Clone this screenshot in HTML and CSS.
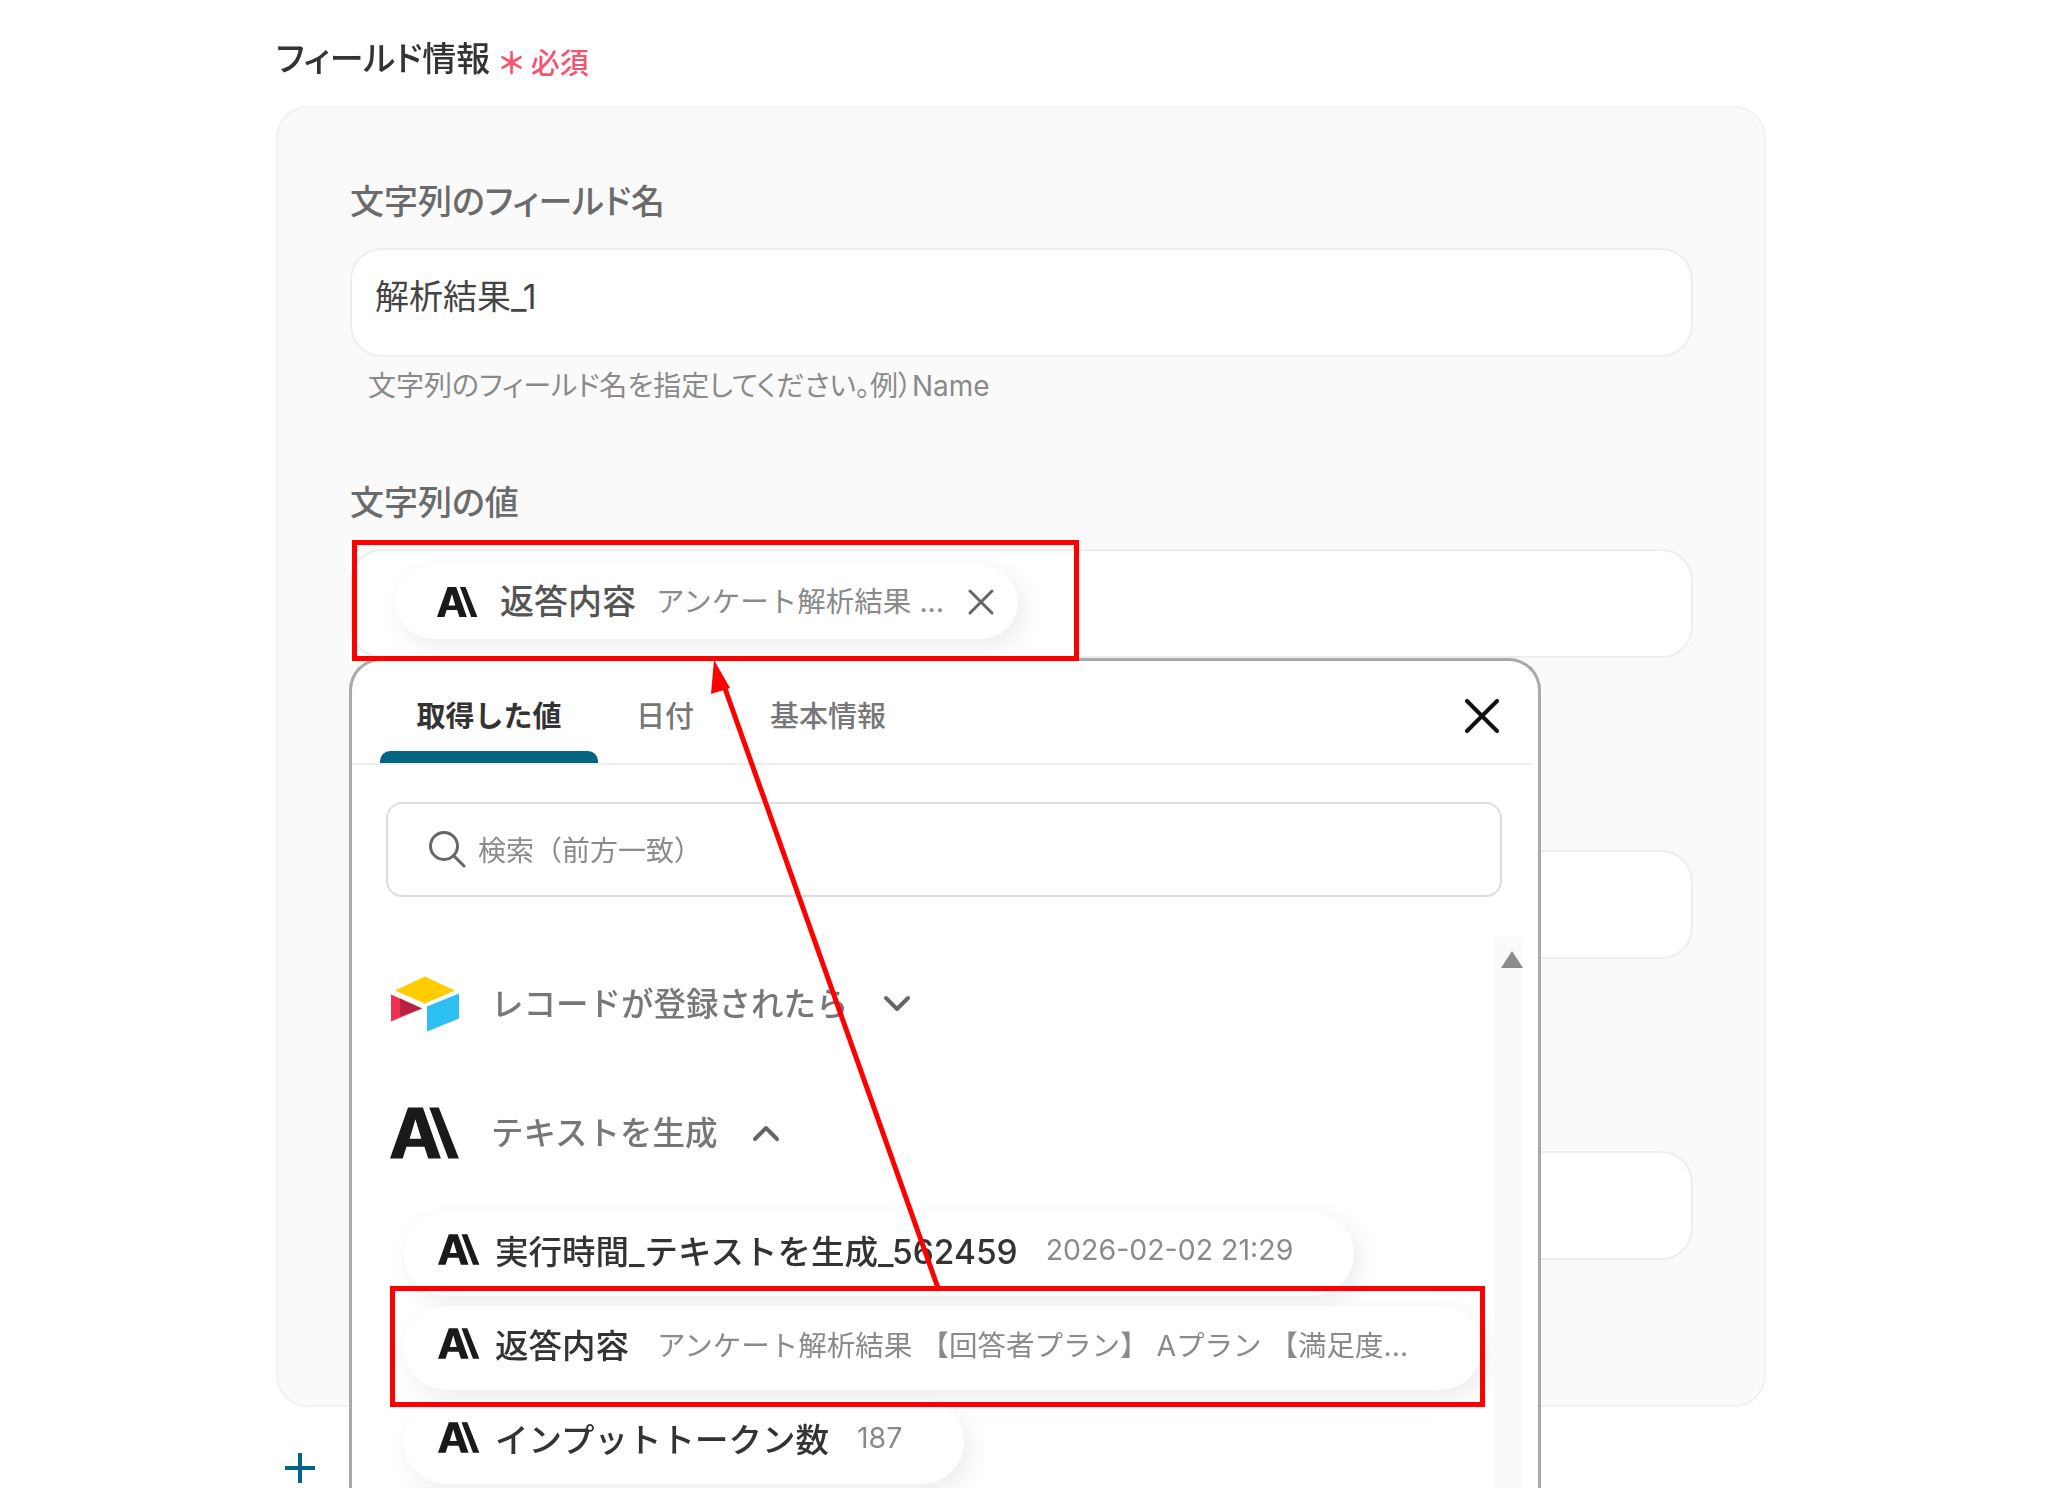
FILE: index.html
```html
<!DOCTYPE html>
<html lang="ja">
<head>
  <meta charset="UTF-8">
  <title>フィールド情報</title>
  <link rel="stylesheet" href="styles.css">
</head>
<body>
  <svg width="0" height="0" class="defs">
    <symbol id="claude" viewBox="0 0 66 48">
      <path fill-rule="evenodd" d="M0 48 L17 0 H31 L48 48 H36 L32.500 37 H15.500 L12 48Z M18.500 29.500 H29.500 L24 11Z"/>
      <path d="M37 0 H46 L65 48 H55Z"/>
    </symbol>
  </svg>

  <div class="page">
    <h2 class="title">フィールド情報 <span class="required"><i>＊</i>必須</span></h2>

    <div class="panel">
      <div class="field">
        <label>文字列のフィールド名</label>
        <div class="input">解析結果_1</div>
        <p class="hint">文字列のフィールド名を指定してください。例）Name</p>
      </div>
      <div class="field">
        <label>文字列の値</label>
        <div class="input input-chip">
          <div class="chip chip-top">
            <svg class="logo-sm"><use href="#claude"/></svg>
            <span class="chip-name">返答内容</span>
            <span class="chip-sub">アンケート解析結果 ...</span>
            <svg class="chip-x" viewBox="0 0 26 26"><path d="M2 2 L24 24 M24 2 L2 24"/></svg>
          </div>
        </div>
      </div>
      <div class="field"><div class="input"></div></div>
      <div class="field"><div class="input"></div></div>

      <div class="popup">
        <div class="tabs">
          <div class="tab active">取得した値</div>
          <div class="tab">日付</div>
          <div class="tab">基本情報</div>
          <svg class="close" viewBox="0 0 34 34"><path d="M2 2 L32 32 M32 2 L2 32"/></svg>
        </div>
        <div class="search">
          <svg class="search-icon" viewBox="0 0 38 38"><circle cx="16" cy="16" r="13.5"/><path d="M26 26 L36 36"/></svg>
          <span>検索（前方一致）</span>
        </div>
        <div class="list-wrap">
          <div class="list">
            <div class="group">
              <svg class="logo-lg" viewBox="10 14 70 57">
                <path fill="#fc0" d="M15 29 L45 15 L75 29 L45 42Z"/>
                <path fill="#2dbff1" d="M47 45 L79 32 V57 L47 70Z"/>
                <path fill="#f0304f" d="M11 33 L42 47 L11 60Z"/>
                <path fill="#b52340" d="M20 37 L42 47 L20 55Z"/>
              </svg>
              <span>レコードが登録されたら</span>
              <svg class="chev" viewBox="0 0 28 18"><path d="M3 3 L14 14 L25 3"/></svg>
            </div>
            <div class="group group-ai">
              <svg class="logo-lg"><use href="#claude"/></svg>
              <span>テキストを生成</span>
              <svg class="chev" viewBox="0 0 28 18"><path d="M3 15 L14 4 L25 15"/></svg>
            </div>
            <div class="chip chip-row w1">
              <svg class="logo-md"><use href="#claude"/></svg>
              <span class="chip-name">実行時間_テキストを生成_562459</span>
              <span class="chip-sub">2026-02-02 21:29</span>
            </div>
            <div class="chip chip-row w2">
              <svg class="logo-md"><use href="#claude"/></svg>
              <span class="chip-name">返答内容</span>
              <span class="chip-sub">アンケート解析結果 【回答者プラン】 Aプラン 【満足度...</span>
            </div>
            <div class="chip chip-row w3">
              <svg class="logo-md"><use href="#claude"/></svg>
              <span class="chip-name">インプットトークン数</span>
              <span class="chip-sub">187</span>
            </div>
          </div>
          <div class="scrollbar"><div class="arrow"></div></div>
        </div>
      </div>
    </div>

    <div class="add">
      <svg viewBox="0 0 32 32"><path d="M16 1 V31 M1 16 H31"/></svg>
    </div>
  </div>

  <!-- annotations on top of the screenshot -->
  <div class="mark mark-top"></div>
  <div class="mark mark-bottom"></div>
  <svg class="arrow-line" viewBox="0 0 2048 1488">
    <path d="M938 1288 L722 680" stroke="#f00" stroke-width="5" fill="none"/>
    <path d="M714 660 L730 688 L711 694Z" fill="#f00"/>
  </svg>
</body>
</html>
```

FILE: styles.css
```css
* {
  box-sizing: border-box;
}

html, body {
  height: 1488px;
}

body {
  margin: 0;
  background: #ffffff;
  color: #333333;
  font-family: Inter, "Noto Sans CJK JP", "Noto Sans", sans-serif;
  overflow: hidden;
  position: relative;
}

.defs {
  position: absolute;
}

.page {
  padding: 36px 282px 0 276px;
  filter: blur(0.6px);
}

.title {
  margin: 0 0 22px;
  height: 48px;
  font-size: 34px;
  font-weight: 500;
  font-feature-settings: "palt";
  line-height: 45px;
  color: #333333;
}

.required {
  color: #f9546f;
  font-size: 29px;
  vertical-align: -3px;
}

.required i {
  font-style: normal;
  font-size: 30px;
  font-weight: 700;
  margin-right: 7px;
}

.panel {
  position: relative;
  height: 1301px;
  padding: 69px 71px 0 72px;
  background: #fafafa;
  border: 2px solid #f1f1f3;
  border-radius: 32px;
}

.field {
  height: 301px;
}

.field label {
  display: block;
  height: 71px;
  font-size: 34px;
  font-weight: 500;
  font-feature-settings: "palt";
  line-height: 50px;
  color: #6b6b6b;
}

.field:nth-child(3), .field:nth-child(4) {
  padding-top: 71px;
}

.input {
  height: 109px;
  padding: 25px 23px;
  background: #ffffff;
  border: 2px solid #eeeef2;
  border-radius: 32px;
  font-size: 34px;
  line-height: 44px;
  color: #444444;
}

.input-chip {
  padding: 14px 44px;
}

.hint {
  margin: 11px 0 0 18px;
  font-size: 28px;
  font-feature-settings: "palt";
  line-height: 36px;
  color: #8a8a8a;
}

.chip {
  display: flex;
  align-items: center;
  background: #ffffff;
  border-radius: 42px;
  box-shadow: 6px 8px 24px rgba(0, 0, 0, 0.08);
}

.chip-top {
  width: 622px;
  height: 74px;
  padding: 0 24px 0 41px;
}

.chip-name {
  font-size: 33.5px;
  font-weight: 500;
  color: #333333;
  white-space: nowrap;
}

.chip-top .chip-name {
  color: #555555;
  font-size: 34px;
  margin-left: 22px;
}

.chip-sub {
  font-size: 28.5px;
  color: #8a8a8a;
  margin-left: 28px;
  white-space: nowrap;
}

.chip-top .chip-sub {
  margin-left: 20px;
}

.chip-x {
  width: 26px;
  height: 26px;
  margin-left: auto;
  fill: none;
  stroke: #666666;
  stroke-width: 3;
  stroke-linecap: round;
}

.logo-sm {
  width: 41px;
  height: 30px;
  flex: none;
  fill: #1a1a1a;
}

.logo-md {
  width: 42px;
  height: 31px;
  flex: none;
  fill: #1a1a1a;
}

.logo-lg {
  width: 70px;
  height: 58px;
  flex: none;
  fill: #1a1a1a;
}

.popup {
  position: absolute;
  left: 71px;
  top: 550px;
  width: 1192px;
  height: 900px;
  background: #ffffff;
  border: 3px solid #a9a9a9;
  border-bottom: none;
  border-radius: 32px 32px 0 0;
}

.tabs {
  display: flex;
  align-items: flex-start;
  height: 104px;
  margin-right: 6px;
  padding: 0 33px 0 28px;
  border-bottom: 2px solid #eeeeee;
}

.tab {
  position: relative;
  height: 102px;
  padding: 0 38px;
  font-size: 29px;
  font-weight: 500;
  line-height: 112px;
  color: #777777;
}

.tab.active {
  width: 218px;
  padding: 0;
  text-align: center;
  font-weight: 700;
  color: #333333;
}

.tab.active::after {
  content: "";
  position: absolute;
  left: 0;
  right: 0;
  bottom: 0;
  height: 12px;
  background: #046582;
  border-radius: 10px 10px 0 0;
}

.close {
  width: 34px;
  height: 34px;
  margin: 38px 0 0 auto;
  fill: none;
  stroke: #111111;
  stroke-width: 4;
  stroke-linecap: round;
}

.search {
  display: flex;
  align-items: center;
  gap: 12px;
  height: 95px;
  margin: 37px 36px 0 34px;
  padding: 0 0 2px 40px;
  border: 2px solid #dddddd;
  border-radius: 16px;
  font-size: 28px;
  color: #8a8a8a;
}

.search-icon {
  width: 38px;
  height: 38px;
  fill: none;
  stroke: #666666;
  stroke-width: 3;
  stroke-linecap: round;
}

.list-wrap {
  display: flex;
  margin-top: 40px;
  height: 640px;
}

.list {
  flex: 1;
  padding: 38px 0 0 38px;
}

.group {
  display: flex;
  align-items: center;
  height: 58px;
  font-size: 32.500px;
  font-weight: 500;
  color: #777777;
  white-space: nowrap;
}

.group span {
  margin-left: 31px;
  padding-bottom: 5px;
}

.group-ai {
  margin-top: 71px;
  margin-bottom: 50px;
}

.chev {
  width: 28px;
  height: 18px;
  margin-left: 34px;
  fill: none;
  stroke: #666666;
  stroke-width: 4;
  stroke-linecap: round;
  stroke-linejoin: round;
}

.chip-row {
  height: 84px;
  margin: 0 0 10px 14px;
  padding: 0 0 10px 34px;
}

.chip-row .chip-name {
  margin-left: 15px;
}

.w1 { width: 950px; }
.w2 { width: 1078px; }
.w3 { width: 560px; }

.scrollbar {
  width: 29px;
  margin-right: 15px;
  padding: 14px 0 0 7px;
  background: #fafafa;
}

.arrow {
  width: 0;
  height: 0;
  border-left: 11px solid transparent;
  border-right: 11px solid transparent;
  border-bottom: 17px solid #8c8c8c;
}

.add {
  position: absolute;
  left: 284px;
  top: 1452px;
}

.add svg {
  display: block;
  width: 32px;
  height: 32px;
  fill: none;
  stroke: #046582;
  stroke-width: 4;
}

.mark {
  position: absolute;
  border: 5px solid #ff0000;
}

.mark-top {
  left: 352px;
  top: 540px;
  width: 727px;
  height: 121px;
}

.mark-bottom {
  left: 390px;
  top: 1286px;
  width: 1095px;
  height: 121px;
}

.arrow-line {
  position: absolute;
  left: 0;
  top: 0;
  width: 2048px;
  height: 1488px;
}
```
